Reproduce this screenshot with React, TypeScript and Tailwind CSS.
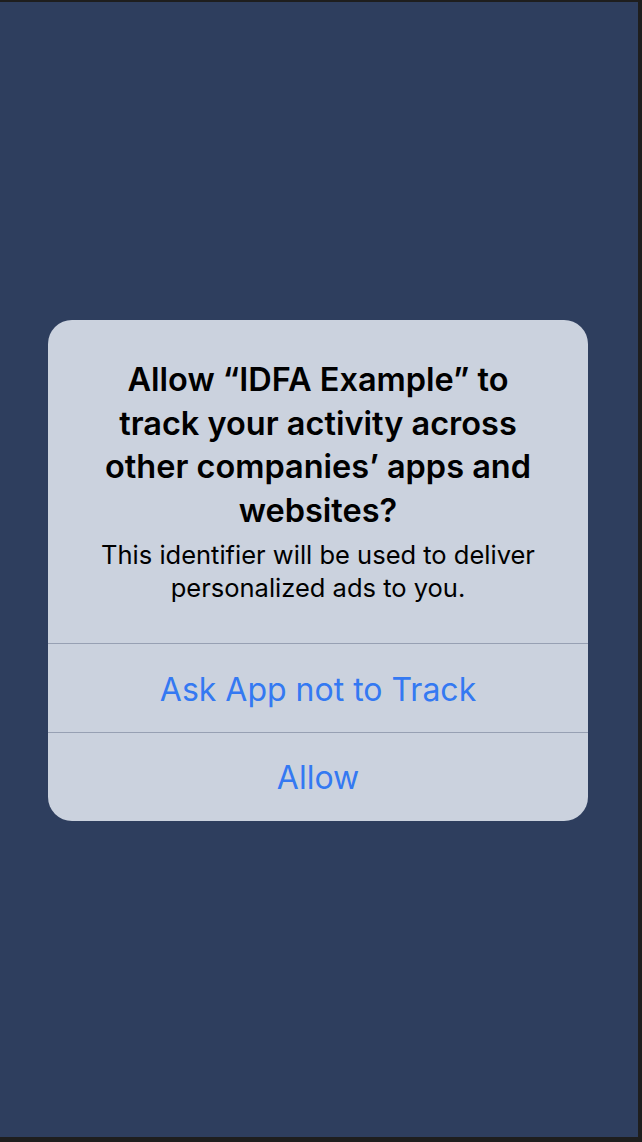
import React from "react";

export default function App() {
  return (
    <div className="w-[642px] h-[1142px] bg-[#1e1e1e] pt-[2px] pr-[4px] pb-[5px] flex flex-col">
      <div className="flex-1 bg-[#2e3e5e] pl-[48px] pt-[318px]">
        <div
          className="w-[540px] rounded-[24px] bg-[#cbd2de] flex flex-col text-center"
          style={{ fontFamily: "Inter, 'Noto Sans', sans-serif" }}
        >
          <div className="pt-[38px] pb-[39px] px-[20px] flex flex-col gap-[6px]">
            <div className="text-[32.5px] leading-[43.5px] font-semibold text-black">
              Allow “IDFA Example” to
              <br />
              track your activity across
              <br />
              other companies’ apps and
              <br />
              websites?
            </div>
            <div className="text-[25.5px] leading-[33px] text-black">
              This identifier will be used to deliver
              <br />
              personalized ads to you.
            </div>
          </div>
          <div className="h-px bg-[#97a0b3]" />
          <div className="h-[88px] pt-[3px] flex items-center justify-center text-[32px] text-[#3479f2]">
            Ask App not to Track
          </div>
          <div className="h-px bg-[#97a0b3]" />
          <div className="h-[88px] pt-[1px] flex items-center justify-center text-[32px] text-[#3479f2]">
            Allow
          </div>
        </div>
      </div>
    </div>
  );
}
